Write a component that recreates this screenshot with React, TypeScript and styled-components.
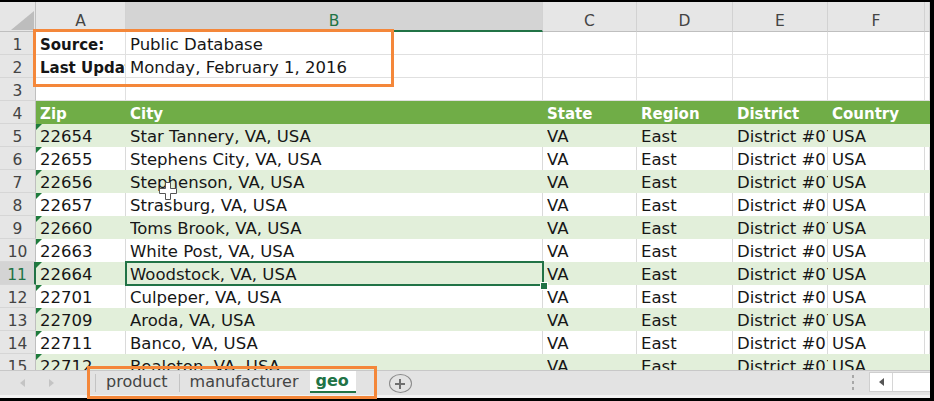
import React from "react";
import styled, { createGlobalStyle, css } from "styled-components";

const GREEN = "#217346";
const ORANGE = "#F4873A";

const GlobalStyle = createGlobalStyle`
  *, *::before, *::after { box-sizing: border-box; }
  html, body { margin: 0; padding: 0; background: #fff; }
  body { font-family: "DejaVu Sans", "Liberation Sans", sans-serif; }
`;

type Kind = "plain" | "head" | "band" | "row";

const Frame = styled.div`
  position: relative;
  width: 934px;
  height: 401px;
  border-top: 2px solid #000;
  border-right: 4px solid #000;
  border-bottom: 3px solid #000;
  display: flex;
  flex-direction: column;
  background: #fff;
`;

const Sheet = styled.div`
  height: 368px;
  overflow: hidden;
  display: grid;
  grid-template-columns: 36px 90px 417px 94px 96px 95px 97px 1fr;
  grid-template-rows: 30px;
  grid-auto-rows: 23px;
  font-size: 16.5px;
  color: #161616;
`;

const Corner = styled.div`
  position: relative;
  background: #e6e6e6;
  border-right: 1px solid #bfbfbf;
  border-bottom: 1px solid #bfbfbf;
  &::after {
    content: "";
    position: absolute;
    right: 1px;
    bottom: 1px;
    border-style: solid;
    border-width: 0 0 19px 23px;
    border-color: transparent transparent #bdbdbd transparent;
  }
`;

const ColHead = styled.div<{ $sel?: boolean }>`
  text-align: center;
  font-size: 15.5px;
  line-height: 20px;
  padding-top: 9px;
  background: ${(p) => (p.$sel ? "#d4d4d4" : "#e6e6e6")};
  color: ${(p) => (p.$sel ? GREEN : "#444")};
  border-right: 1px solid #d2d2d2;
  border-bottom: ${(p) => (p.$sel ? `2px solid ${GREEN}` : "1px solid #bfbfbf")};
`;

const RowHead = styled.div<{ $sel?: boolean }>`
  text-align: center;
  font-size: 15.5px;
  line-height: 20px;
  padding-top: 3px;
  background: ${(p) => (p.$sel ? "#d4d4d4" : "#e6e6e6")};
  color: ${(p) => (p.$sel ? GREEN : "#444")};
  border-right: ${(p) => (p.$sel ? `2px solid ${GREEN}` : "1px solid #bfbfbf")};
  border-bottom: 1px solid #d6d6d6;
`;

const kindStyles: Record<Kind, ReturnType<typeof css>> = {
  plain: css`
    background: #fff;
    border-right: 1px solid #e0e0e0;
    border-bottom: 1px solid #e0e0e0;
  `,
  head: css`
    background: #70ad47;
    color: #fff;
    font-weight: 700;
    font-size: 15px;
  `,
  band: css`
    background: #e2efda;
  `,
  row: css`
    background: #fff;
    border-right: 1px solid #dadada;
  `,
};

const Cell = styled.div<{ $kind: Kind; $bold?: boolean; $flag?: boolean; $sel?: boolean }>`
  position: relative;
  min-width: 0;
  padding: 3px 0 0 4px;
  line-height: 20px;
  ${(p) => kindStyles[p.$kind]}
  ${(p) =>
    p.$bold &&
    css`
      font-weight: 700;
      font-size: 15px;
    `}
  ${(p) =>
    p.$flag &&
    css`
      &::before {
        content: "";
        position: absolute;
        top: 0;
        left: 0;
        border-style: solid;
        border-width: 6px 6px 0 0;
        border-color: #1e7b3c transparent transparent transparent;
      }
    `}
  ${(p) =>
    p.$sel &&
    css`
      z-index: 2;
      &::after {
        content: "";
        position: absolute;
        inset: -1px;
        border: 2px solid ${GREEN};
        pointer-events: none;
      }
    `}
`;

const CellText = styled.span`
  display: block;
  white-space: nowrap;
  overflow: hidden;
`;

const FillHandle = styled.span`
  position: absolute;
  right: -4px;
  bottom: -4px;
  width: 6px;
  height: 6px;
  background: ${GREEN};
  outline: 1px solid #fff;
  z-index: 3;
`;

const TabBar = styled.div`
  height: 28px;
  display: flex;
  align-items: flex-start;
  background: #e3e3e3;
  border-top: 1px solid #c8c8c8;
  border-bottom: 3px solid #f3f3f3;
  font-size: 16px;
  color: #444;
`;

const NavArea = styled.div`
  width: 95px;
  height: 24px;
  display: flex;
  align-items: center;
  gap: 24px;
  padding-left: 20px;
`;

const NavArrow = styled.span<{ $dir: "left" | "right" }>`
  width: 0;
  height: 0;
  border-top: 4.5px solid transparent;
  border-bottom: 4.5px solid transparent;
  ${(p) =>
    p.$dir === "left"
      ? css`border-right: 5px solid #c4c4c4;`
      : css`border-left: 5px solid #c4c4c4;`}
`;

const Tab = styled.div<{ $active?: boolean }>`
  position: relative;
  height: 23px;
  line-height: 22px;
  white-space: nowrap;
  ${(p) =>
    p.$active
      ? css`
          padding: 0 7px 0 6px;
          height: 22px;
          line-height: 20px;
          background: #fff;
          color: ${GREEN};
          font-weight: 700;
          border-bottom: 2px solid ${GREEN};
        `
      : css`
          padding: 0 11px 0 11px;
          &::before {
            content: "";
            position: absolute;
            left: 0;
            top: 3px;
            bottom: 2px;
            width: 1px;
            background: #c4c4c4;
          }
        `}
`;

const AddButton = styled.div`
  margin: 3px 0 0 33px;
  width: 23px;
  height: 19px;
  border: 1.5px solid #8a8a8a;
  border-radius: 50%;
  display: flex;
  align-items: center;
  justify-content: center;
`;

const Spacer = styled.div`
  flex: 1;
`;

const Dots = styled.div`
  margin: 4px 15px 0 0;
  display: flex;
  flex-direction: column;
  gap: 3px;
`;

const Dot = styled.span`
  width: 2px;
  height: 3px;
  background: #a8a8a8;
`;

const ScrollBox = styled.div`
  margin-top: 1px;
  width: 61px;
  height: 20px;
  background: #fff;
  border: 1px solid #cfcfcf;
  border-right: none;
  display: flex;
  align-items: center;
`;

const ScrollArrow = styled.div`
  width: 23px;
  height: 100%;
  display: flex;
  align-items: center;
  justify-content: center;
  border-right: 1px solid #d6d6d6;
  &::before {
    content: "";
    border-top: 4px solid transparent;
    border-bottom: 4px solid transparent;
    border-right: 5px solid #555;
  }
`;

const SourceCallout = styled.div`
  position: absolute;
  left: 33px;
  top: 27px;
  width: 361px;
  height: 58px;
  border: 3px solid ${ORANGE};
  pointer-events: none;
  z-index: 5;
`;

const TabsCallout = styled.div`
  position: absolute;
  left: 87px;
  top: 364px;
  width: 290px;
  height: 33px;
  border: 3px solid ${ORANGE};
  pointer-events: none;
  z-index: 5;
`;

const Cursor = styled.svg`
  position: absolute;
  left: 159px;
  top: 180px;
  z-index: 6;
`;

type RowDef = { n: number; kind: Kind; cells: string[]; boldA?: boolean; flag?: boolean };

const colLetters = ["A", "B", "C", "D", "E", "F", ""];
const empty = ["", "", "", "", "", "", ""];

const places: [string, string][] = [
  ["22654", "Star Tannery, VA, USA"],
  ["22655", "Stephens City, VA, USA"],
  ["22656", "Stephenson, VA, USA"],
  ["22657", "Strasburg, VA, USA"],
  ["22660", "Toms Brook, VA, USA"],
  ["22663", "White Post, VA, USA"],
  ["22664", "Woodstock, VA, USA"],
  ["22701", "Culpeper, VA, USA"],
  ["22709", "Aroda, VA, USA"],
  ["22711", "Banco, VA, USA"],
  ["22712", "Bealeton, VA, USA"],
];

const rows: RowDef[] = [
  { n: 1, kind: "plain", cells: ["Source:", "Public Database", "", "", "", "", ""], boldA: true },
  { n: 2, kind: "plain", cells: ["Last Update:", "Monday, February 1, 2016", "", "", "", "", ""], boldA: true },
  { n: 3, kind: "plain", cells: empty },
  { n: 4, kind: "head", cells: ["Zip", "City", "State", "Region", "District", "Country", ""] },
  ...places.map(([zip, city], i) => ({
    n: 5 + i,
    kind: (i % 2 === 0 ? "band" : "row") as Kind,
    cells: [zip, city, "VA", "East", "District #07", "USA", ""],
    flag: true,
  })),
];

const SEL_ROW = 11;
const SEL_COL = 1;

export default function App() {
  return (
    <>
      <GlobalStyle />
      <Frame>
        <Sheet>
          <Corner />
          {colLetters.map((l, i) => (
            <ColHead key={i} $sel={i === SEL_COL}>
              {l}
            </ColHead>
          ))}
          {rows.map((r) => (
            <React.Fragment key={r.n}>
              <RowHead $sel={r.n === SEL_ROW}>{r.n}</RowHead>
              {r.cells.map((c, ci) => {
                const sel = r.n === SEL_ROW && ci === SEL_COL;
                return (
                  <Cell
                    key={ci}
                    $kind={r.kind}
                    $bold={r.boldA && ci === 0}
                    $flag={r.flag && ci === 0}
                    $sel={sel}
                  >
                    <CellText>{c}</CellText>
                    {sel && <FillHandle />}
                  </Cell>
                );
              })}
            </React.Fragment>
          ))}
        </Sheet>
        <TabBar>
          <NavArea>
            <NavArrow $dir="left" />
            <NavArrow $dir="right" />
          </NavArea>
          <Tab>product</Tab>
          <Tab>manufacturer</Tab>
          <Tab $active>geo</Tab>
          <AddButton>
            <svg width="12" height="12" viewBox="0 0 12 12">
              <path d="M6 1v10M1 6h10" stroke="#6e6e6e" strokeWidth="2" />
            </svg>
          </AddButton>
          <Spacer />
          <Dots>
            <Dot />
            <Dot />
            <Dot />
          </Dots>
          <ScrollBox>
            <ScrollArrow />
          </ScrollBox>
        </TabBar>
        <SourceCallout />
        <TabsCallout />
        <Cursor width="19" height="19" viewBox="0 0 19 19">
          <path
            d="M6.5 0.5H11.5V6.5H17.5V11.5H11.5V17.5H6.5V11.5H0.5V6.5H6.5Z"
            fill="#fff"
            stroke="#555"
            strokeWidth="1"
          />
        </Cursor>
      </Frame>
    </>
  );
}
